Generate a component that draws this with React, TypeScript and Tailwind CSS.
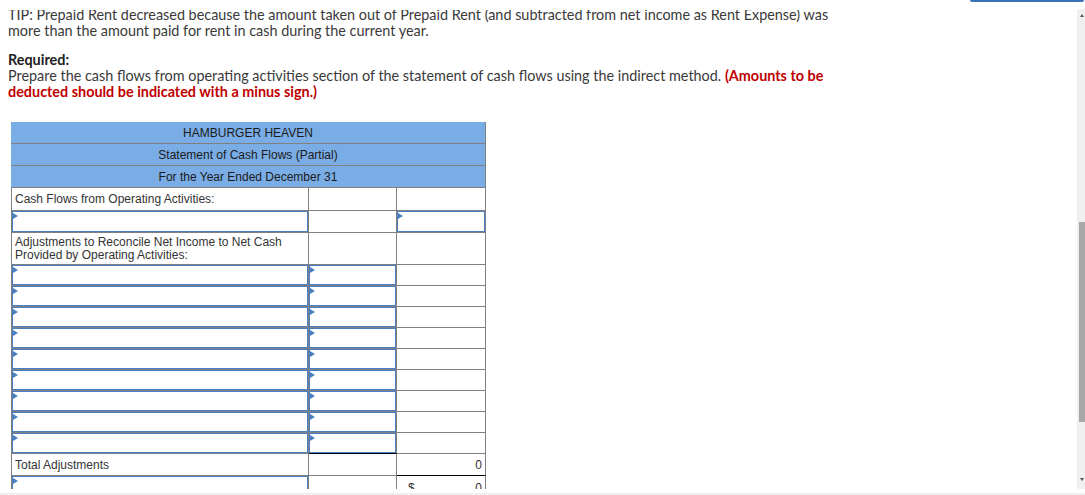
import React from 'react';

const gray = 'border-[#808080]';

function Flag() {
  return (
    <span className="absolute left-0 top-[1px] w-0 h-0 border-l-[5px] border-l-[#4a7fc1] border-y-[3px] border-y-transparent" />
  );
}

function InputCell({ blackBottom = false }: { blackBottom?: boolean }) {
  return (
    <div className={`border-r border-b ${blackBottom ? 'border-b-black' : gray} ${gray} h-full`}>
      <div className="relative h-full border border-[#4a7fc1]">
        <Flag />
      </div>
    </div>
  );
}

function Cell({ children, className = '' }: { children?: React.ReactNode; className?: string }) {
  return <div className={`border-r border-b ${gray} h-full ${className}`}>{children}</div>;
}

function HeaderRow({ text }: { text: string }) {
  return (
    <div className={`col-span-3 h-[22px] bg-[#7aade5] border-r border-b ${gray} flex items-center justify-center text-[12px] text-[#1a1a1a]`}>
      {text}
    </div>
  );
}

export default function App() {
  const adjustRows = Array.from({ length: 9 });

  return (
    <div className="w-[1085px] h-[495px] bg-white overflow-hidden relative" style={{ fontFamily: 'Lato, "Open Sans", sans-serif' }}>
      {/* peeking button from above */}
      <div className="absolute top-0 right-[1px] w-[114px] h-[2px] bg-[#3a72b8] rounded-b-[2px]" />

      <div className="flex h-[489px]">
        <div className="flex-1 pt-[10px] pl-[8px]">
          <div className="h-full overflow-hidden">
            <div className="-mt-[3px] text-[14.4px] leading-[16px] text-[#3a3a3a] whitespace-nowrap">
              <div>TIP: Prepaid Rent decreased because the amount taken out of Prepaid Rent (and subtracted from net income as Rent Expense) was</div>
              <div>more than the amount paid for rent in cash during the current year.</div>
            </div>

            <div className="mt-[13px] text-[14.4px] leading-[16px] text-[#3a3a3a] whitespace-nowrap">
              <div className="font-bold text-[#222]">Required:</div>
              <div>
                Prepare the cash flows from operating activities section of the statement of cash flows using the indirect method.{' '}
                <span className="font-bold text-[#c00000]">(Amounts to be</span>
              </div>
              <div className="font-bold text-[#c00000]">deducted should be indicated with a minus sign.)</div>
            </div>

            <div
              className="mt-[22px] ml-[3px] w-[475px] grid grid-cols-[298px_88px_89px] text-[12px] text-[#333]"
              style={{ fontFamily: '"Liberation Sans", Arial, sans-serif' }}
            >
              <HeaderRow text="HAMBURGER HEAVEN" />
              <HeaderRow text="Statement of Cash Flows (Partial)" />
              <HeaderRow text="For the Year Ended December 31" />

              {/* Cash flows heading */}
              <div className={`h-[23px] border-l border-r border-b ${gray} flex items-center pl-[3px]`}>
                Cash Flows from Operating Activities:
              </div>
              <Cell className="h-[23px]" />
              <Cell className="h-[23px]" />

              <div className={`h-[22px] border-l ${gray}`}>
                <InputCell />
              </div>
              <div className="h-[22px]"><Cell /></div>
              <div className="h-[22px]"><InputCell /></div>

              {/* Adjustments heading */}
              <div className={`h-[32px] border-l border-r border-b ${gray} pl-[3px] pt-[3px] leading-[13px]`}>
                Adjustments to Reconcile Net Income to Net Cash
                <br />
                Provided by Operating Activities:
              </div>
              <Cell className="h-[32px]" />
              <Cell className="h-[32px]" />

              {adjustRows.map((_, i) => (
                <React.Fragment key={i}>
                  <div className={`h-[21px] border-l ${gray}`}>
                    <InputCell />
                  </div>
                  <div className="h-[21px]">
                    <InputCell blackBottom={i === adjustRows.length - 1} />
                  </div>
                  <div className="h-[21px]"><Cell /></div>
                </React.Fragment>
              ))}

              {/* Total adjustments */}
              <div className={`h-[22px] border-l border-r border-b ${gray} flex items-center pl-[3px]`}>
                Total Adjustments
              </div>
              <Cell className="h-[22px]" />
              <div className="h-[22px] border-r border-b border-r-[#808080] border-b-black flex items-center justify-end pr-[3px]">0</div>

              <div className={`h-[22px] border-l ${gray}`}>
                <InputCell />
              </div>
              <div className="h-[22px]"><Cell /></div>
              <div className={`h-[22px] border-r ${gray} flex items-start justify-between pl-[11px] pr-[3px] pt-[3px]`}>
                <span>$</span>
                <span>0</span>
              </div>
            </div>
          </div>
        </div>

        {/* scrollbar */}
        <div className="w-[8px] mt-[9px] bg-[#f0f0f0] flex flex-col items-end">
          <div className="w-0 h-0 mt-[5px] mr-[1px] border-x-[2px] border-x-transparent border-b-[3px] border-b-[#555]" />
          <div className="mt-[205px] w-[6px] h-[200px] bg-[#a8a8a8]" />
          <div className="mt-auto mb-[8px] mr-[1px] w-0 h-0 border-x-[2px] border-x-transparent border-t-[3px] border-t-[#555]" />
        </div>
      </div>
      <div className="h-[4px] bg-white" />
      <div className="h-[2px] bg-[#f0f0f0]" />
    </div>
  );
}
